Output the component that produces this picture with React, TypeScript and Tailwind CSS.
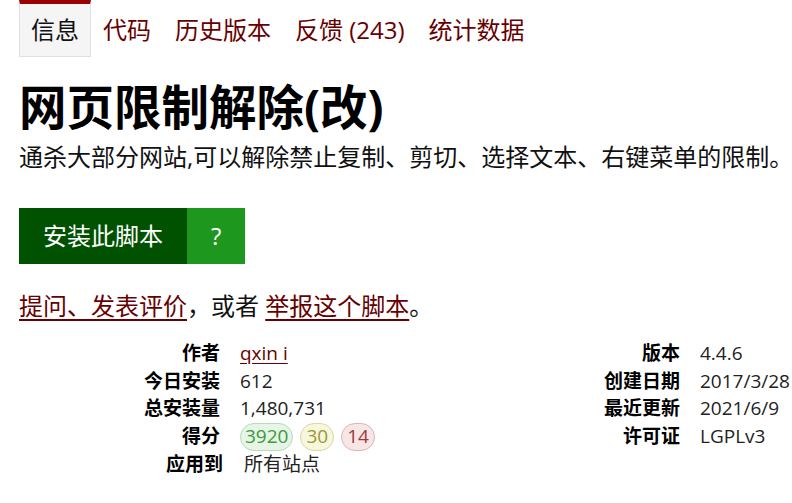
import React from "react";

const font = { fontFamily: '"Open Sans", "Noto Sans CJK SC", sans-serif' };

export default function App() {
  const tabs = ["代码", "历史版本", "反馈 (243)", "统计数据"];
  return (
    <div className="bg-white w-[792px] h-[503px] overflow-hidden text-[#222]" style={font}>
      <ul className="flex pl-[19px] text-[24px] leading-none">
        <li className="h-[57px] px-[11px] flex items-center bg-[#f5f5f5] border border-[#e0e0e0] border-t-4 border-t-[#990000] text-[#111]">
          信息
        </li>
        {tabs.map((t) => (
          <li key={t} className="h-[57px] px-3 flex items-center text-[#670000] pt-[2px]">
            {t}
          </li>
        ))}
      </ul>
      <div className="pl-[19px]">
        <h1 className="mt-[22px] text-[47.5px] font-bold leading-[56px] text-black">
          网页限制解除(改)
        </h1>
        <p className="mt-[6px] text-[24px] leading-[32px] whitespace-nowrap text-[#111]">
          通杀大部分网站,可以解除禁止复制、剪切、选择文本、右键菜单的限制。
        </p>
        <div className="mt-[35px] flex h-[56px] text-white text-[24px]">
          <span className="bg-[#005200] px-6 flex items-center">安装此脚本</span>
          <span className="bg-[#1e971e] px-6 flex items-center">?</span>
        </div>
        <p className="mt-[26px] text-[24px] leading-[32px] text-[#111]">
          <a className="text-[#670000] underline underline-offset-[4px]">提问、发表评价</a>，或者{" "}
          <a className="text-[#670000] underline underline-offset-[4px]">举报这个脚本</a>。
        </p>
      </div>
      <div className="mt-[18px] flex text-[19px] leading-[27.5px] text-[#222]">
        <dl className="w-[460px] grid grid-cols-[220px_1fr] gap-x-5">
          <dt className="text-right font-bold text-black">作者</dt>
          <dd>
            <a className="text-[#670000] underline underline-offset-[3px]">qxin i</a>
          </dd>
          <dt className="text-right font-bold text-black">今日安装</dt>
          <dd>612</dd>
          <dt className="text-right font-bold text-black">总安装量</dt>
          <dd>1,480,731</dd>
          <dt className="text-right font-bold text-black">得分</dt>
          <dd className="flex items-center gap-[7px]">
            <span className="h-[28px] flex items-center px-[4px] rounded-full border border-[#b5dcb5] bg-[#e6f5e6] text-[#3d9a3d]">
              3920
            </span>
            <span className="h-[28px] flex items-center px-[5px] rounded-full border border-[#d8d8a0] bg-[#f7f7e0] text-[#99992e]">
              30
            </span>
            <span className="h-[28px] flex items-center px-[5px] rounded-full border border-[#dcb5b5] bg-[#f7e6e6] text-[#a33a3a]">
              14
            </span>
          </dd>
          <dt className="text-right font-bold text-black translate-x-[3px]">应用到</dt>
          <dd className="translate-x-[4px]">所有站点</dd>
        </dl>
        <dl className="grid grid-cols-[220px_auto] gap-x-5 content-start">
          <dt className="text-right font-bold text-black">版本</dt>
          <dd>4.4.6</dd>
          <dt className="text-right font-bold text-black">创建日期</dt>
          <dd className="whitespace-nowrap">2017/3/28</dd>
          <dt className="text-right font-bold text-black">最近更新</dt>
          <dd>2021/6/9</dd>
          <dt className="text-right font-bold text-black">许可证</dt>
          <dd>LGPLv3</dd>
        </dl>
      </div>
    </div>
  );
}
